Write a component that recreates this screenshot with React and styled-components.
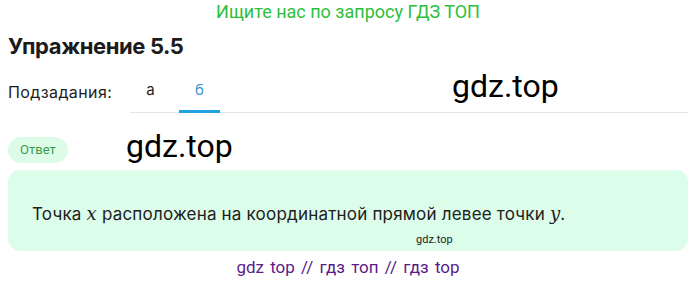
import React from "react";
import styled, { createGlobalStyle } from "styled-components";

const GlobalStyle = createGlobalStyle`
  body {
    margin: 0;
    background: #ffffff;
    font-family: Inter, "Noto Sans", sans-serif;
    color: #1b1b1b;
  }
`;

const Page = styled.div`
  position: relative;
  width: 700px;
  height: 281px;
  overflow: hidden;
  padding: 0 12px 0 8px;
  box-sizing: border-box;
`;

const Promo = styled.div`
  height: 25px;
  line-height: 24px;
  text-align: center;
  font-family: Roboto, sans-serif;
  font-size: 18px;
  color: #2dbf3b;
`;

const Title = styled.h2`
  margin: 6px 0 0;
  font-size: 22px;
  line-height: 30px;
  font-weight: 700;
  letter-spacing: -0.4px;
`;

const SubtaskRow = styled.div`
  display: flex;
  align-items: flex-end;
  margin-top: 17px;
`;

const SubtaskLabel = styled.span`
  width: 122px;
  font-size: 16px;
  letter-spacing: 0.4px;
  line-height: 24px;
  padding-bottom: 9px;
  color: #1d1d1d;
`;

const Tabs = styled.div`
  flex: 1;
  display: flex;
  gap: 8px;
  border-bottom: 1px solid #e4e4e4;
`;

const Tab = styled.span`
  width: 41px;
  text-align: center;
  font-size: 15px;
  line-height: 24px;
  padding-bottom: 8px;
  margin-bottom: -1px;
  color: ${({ $active }) => ($active ? "#3d98cf" : "#1d1d1d")};
  border-bottom: 3px solid ${({ $active }) => ($active ? "#1fa2df" : "transparent")};
`;

const Badge = styled.div`
  display: inline-block;
  margin-top: 24px;
  padding: 0 12px;
  height: 26px;
  line-height: 26px;
  border-radius: 13px;
  background: #dcfce8;
  color: #3c9a4f;
  font-family: Roboto, sans-serif;
  font-size: 13px;
`;

const AnswerBox = styled.div`
  margin-top: 7px;
  height: 81px;
  box-sizing: border-box;
  padding: 32px 24px 0;
  border-radius: 12px;
  background: #dcfde9;
  position: relative;
`;

const AnswerText = styled.p`
  margin: 0;
  font-size: 17px;
  letter-spacing: 0.2px;
  line-height: 24px;
  color: #202020;
`;

const MathVar = styled.span`
  font-family: "DejaVu Serif", "Liberation Serif", serif;
  font-style: italic;
  font-size: 18px;
`;

const SmallMark = styled.span`
  position: absolute;
  left: 408px;
  top: 63px;
  font-family: Roboto, sans-serif;
  font-size: 11px;
  color: #222;
`;

const Footer = styled.div`
  margin-top: 3px;
  text-align: center;
  font-family: Roboto, sans-serif;
  font-size: 17px;
  line-height: 26px;
  color: #5a1b8c;
  word-spacing: 2px;
`;

const Watermark = styled.span`
  position: absolute;
  left: ${({ $x }) => $x}px;
  top: ${({ $y }) => $y}px;
  font-family: Roboto, sans-serif;
  font-size: 32px;
  color: #000;
`;

export default function App() {
  return (
    <>
      <GlobalStyle />
      <Page>
        <Promo>Ищите нас по запросу ГДЗ ТОП</Promo>
        <Title>Упражнение 5.5</Title>
        <SubtaskRow>
          <SubtaskLabel>Подзадания:</SubtaskLabel>
          <Tabs>
            <Tab>а</Tab>
            <Tab $active>б</Tab>
          </Tabs>
        </SubtaskRow>
        <Badge>Ответ</Badge>
        <AnswerBox>
          <AnswerText>
            Точка <MathVar>x</MathVar> расположена на координатной прямой левее точки{" "}
            <MathVar>y</MathVar>.
          </AnswerText>
          <SmallMark>gdz.top</SmallMark>
        </AnswerBox>
        <Footer>gdz top // гдз топ // гдз top</Footer>
        <Watermark $x={452} $y={67}>gdz.top</Watermark>
        <Watermark $x={126} $y={127}>gdz.top</Watermark>
      </Page>
    </>
  );
}
